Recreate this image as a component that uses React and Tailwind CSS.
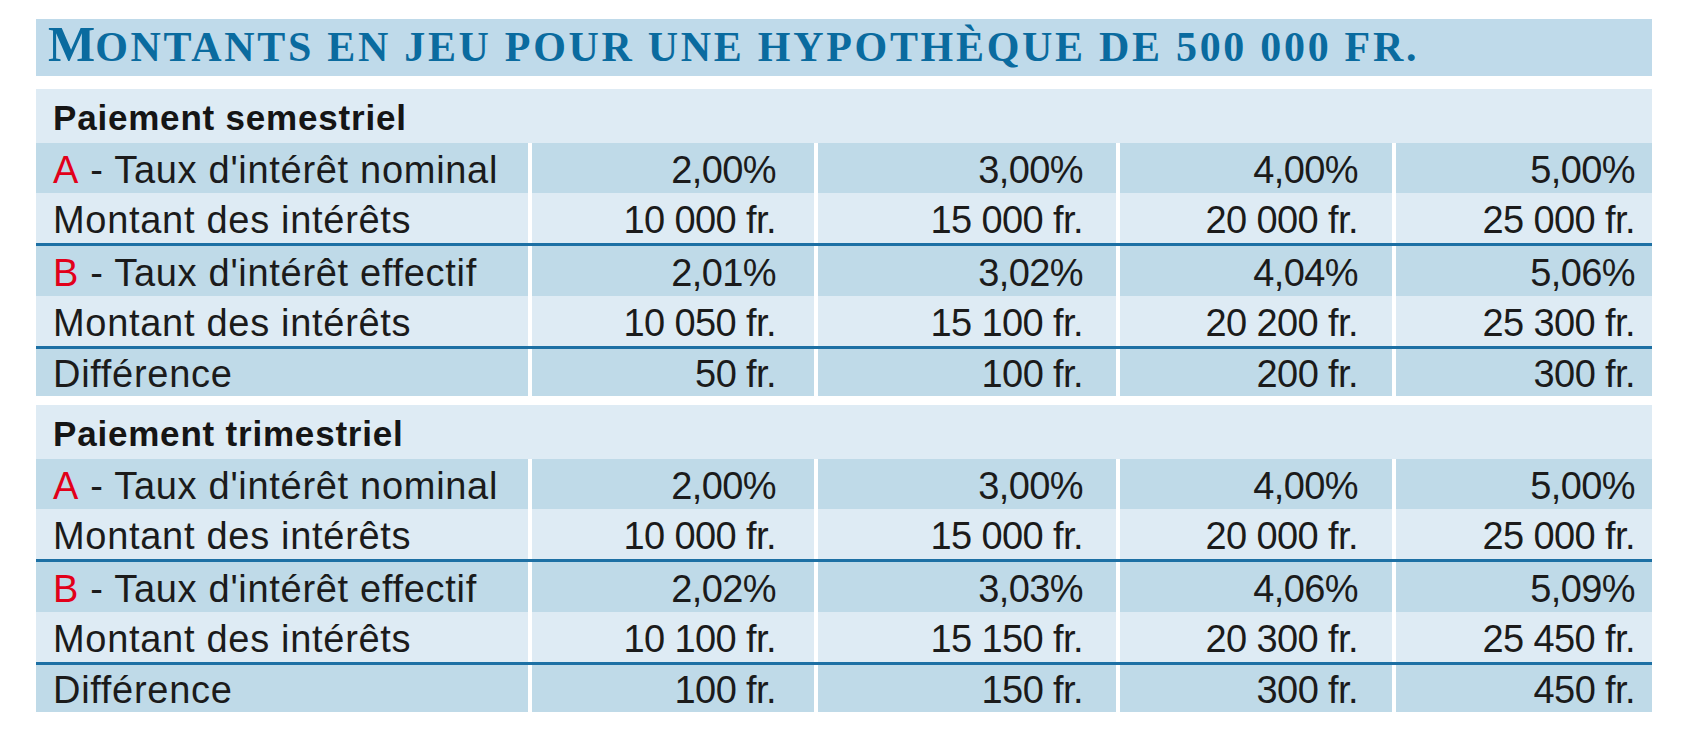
import React from 'react'

const sections = [
  {
    title: 'Paiement semestriel',
    rows: [
      { label: 'A', text: ' - Taux d\'intérêt nominal', values: ['2,00%', '3,00%', '4,00%', '5,00%'], tone: 'dark' },
      { text: 'Montant des intérêts', values: ['10 000 fr.', '15 000 fr.', '20 000 fr.', '25 000 fr.'], tone: 'light', lineAfter: true },
      { label: 'B', text: ' - Taux d\'intérêt effectif', values: ['2,01%', '3,02%', '4,04%', '5,06%'], tone: 'dark' },
      { text: 'Montant des intérêts', values: ['10 050 fr.', '15 100 fr.', '20 200 fr.', '25 300 fr.'], tone: 'light', lineAfter: true },
      { text: 'Différence', values: ['50 fr.', '100 fr.', '200 fr.', '300 fr.'], tone: 'dark', last: true },
    ],
  },
  {
    title: 'Paiement trimestriel',
    rows: [
      { label: 'A', text: ' - Taux d\'intérêt nominal', values: ['2,00%', '3,00%', '4,00%', '5,00%'], tone: 'dark' },
      { text: 'Montant des intérêts', values: ['10 000 fr.', '15 000 fr.', '20 000 fr.', '25 000 fr.'], tone: 'light', lineAfter: true },
      { label: 'B', text: ' - Taux d\'intérêt effectif', values: ['2,02%', '3,03%', '4,06%', '5,09%'], tone: 'dark' },
      { text: 'Montant des intérêts', values: ['10 100 fr.', '15 150 fr.', '20 300 fr.', '25 450 fr.'], tone: 'light', lineAfter: true },
      { text: 'Différence', values: ['100 fr.', '150 fr.', '300 fr.', '450 fr.'], tone: 'dark', last: true },
    ],
  },
]

// right padding per value column, so the figures sit on the same tab stops
const padRight = ['pr-[38px]', 'pr-[33px]', 'pr-[34px]', 'pr-[17px]']

function Row({ row }) {
  const bg = row.tone === 'dark' ? 'bg-[#bfdae8]' : 'bg-[#deebf4]'
  const h = row.last ? 'h-[47px]' : 'h-[50px]'
  return (
    <div className={`grid grid-cols-[492px_282px_298px_272px_256px] gap-x-[4px] ${h}`}>
      <div className={`${bg} pl-[17px] pt-[3px] flex items-center whitespace-nowrap tracking-[0.7px]`}>
        {row.label && <span className="text-[#e2001a]">{row.label}</span>}
        <span className="whitespace-pre">{row.text}</span>
      </div>
      {row.values.map((v, i) => (
        <div key={i} className={`${bg} ${padRight[i]} pt-[3px] flex items-center justify-end whitespace-nowrap tracking-[-0.6px]`}>
          {v}
        </div>
      ))}
    </div>
  )
}

export default function App() {
  return (
    <div className="bg-white w-[1686px] h-[739px] pt-[19px] pl-[36px] text-[#1b1b1b]" style={{ fontFamily: '"Liberation Sans", Arial, sans-serif' }}>
      <div className="w-[1616px]">
        <div className="h-[57px] bg-[#bfdaea] pl-[12px] text-[42px] leading-[57px] text-[#0a6b9f] font-bold whitespace-nowrap" style={{ fontFamily: '"Liberation Serif", "Times New Roman", serif' }}>
          <span className="text-[50px] leading-none">M</span>
          <span className="uppercase tracking-[2.7px]">ontants en jeu pour une hypothèque de 500 000 fr.</span>
        </div>

        <div className="mt-[13px] flex flex-col gap-y-[9px] text-[38px] leading-[44px]">
          {sections.map((s) => (
            <div key={s.title} className="flex flex-col">
              <div className="h-[54px] bg-[#deebf4] pl-[17px] pt-[4px] flex items-center font-bold text-[35px] tracking-[0.8px] text-[#151515]">
                {s.title}
              </div>
              {s.rows.map((r, i) => (
                <React.Fragment key={i}>
                  <Row row={r} />
                  {r.lineAfter && <div className="h-[3px] bg-[#1d70a4]" />}
                </React.Fragment>
              ))}
            </div>
          ))}
        </div>
      </div>
    </div>
  )
}
